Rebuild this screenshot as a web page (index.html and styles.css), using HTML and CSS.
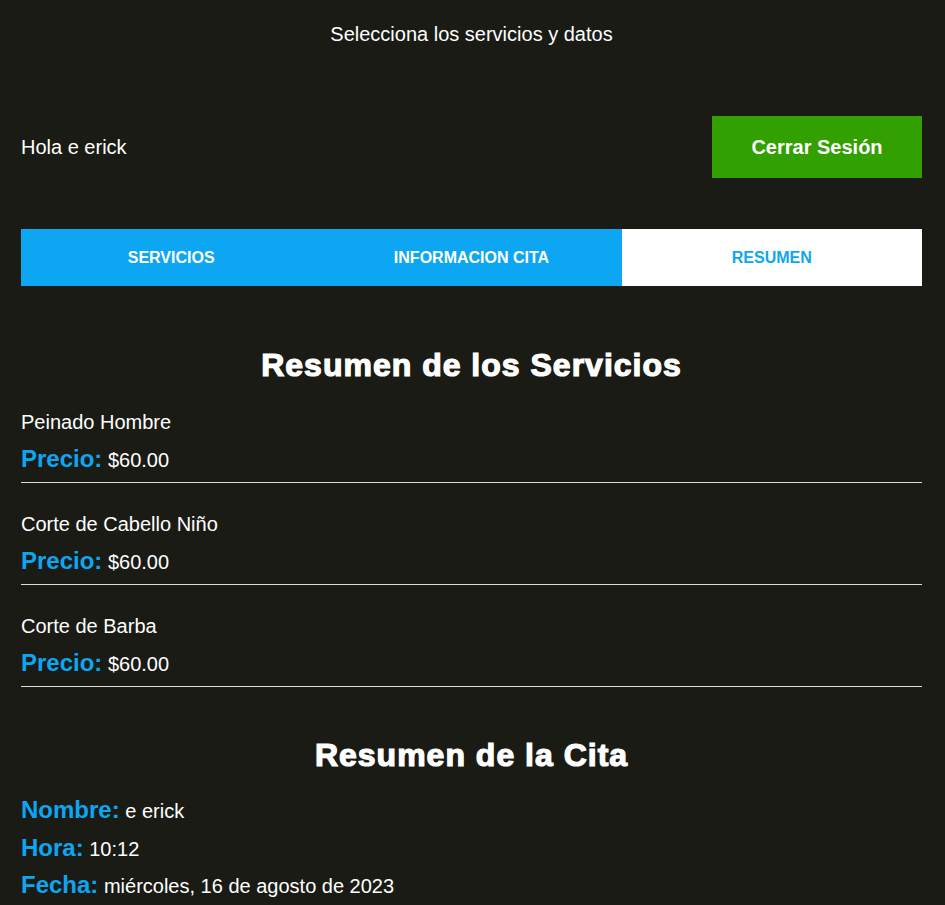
FILE: index.html
```html
<!DOCTYPE html>
<html lang="es">
<head>
<meta charset="UTF-8">
<title>App Salón</title>
<link rel="stylesheet" href="styles.css">
</head>
<body>
<main class="app">
  <p class="tagline">Selecciona los servicios y datos</p>

  <div class="barra">
    <p class="saludo">Hola e erick</p>
    <a class="boton-cerrar" href="#">Cerrar Sesión</a>
  </div>

  <nav class="tabs">
    <button class="tab" type="button">Servicios</button>
    <button class="tab" type="button">Informacion Cita</button>
    <button class="tab actual" type="button">Resumen</button>
  </nav>

  <section class="resumen">
    <h3 class="titulo titulo-servicios">Resumen de los Servicios</h3>

    <div class="servicio">
      <p class="nombre">Peinado Hombre</p>
      <p class="dato"><span class="etiqueta">Precio:</span> $60.00</p>
    </div>
    <div class="servicio">
      <p class="nombre">Corte de Cabello Niño</p>
      <p class="dato"><span class="etiqueta">Precio:</span> $60.00</p>
    </div>
    <div class="servicio">
      <p class="nombre">Corte de Barba</p>
      <p class="dato"><span class="etiqueta">Precio:</span> $60.00</p>
    </div>

    <h3 class="titulo titulo-cita">Resumen de la Cita</h3>

    <div class="cita">
      <p class="dato"><span class="etiqueta">Nombre:</span> e erick</p>
      <p class="dato"><span class="etiqueta">Hora:</span> 10:12</p>
      <p class="dato"><span class="etiqueta">Fecha:</span> miércoles, 16 de agosto de 2023</p>
    </div>
  </section>
</main>
</body>
</html>
```

FILE: styles.css
```css
* {
  box-sizing: border-box;
}

html {
  background: #1a1b15;
}

body {
  margin: 0;
  background: #1a1b15;
  color: #ffffff;
  font-family: "Liberation Sans", Arial, sans-serif;
  font-size: 20px;
  line-height: 23px;
}

.app {
  padding: 23px 23px 40px 21px;
}

p {
  margin: 0;
}

.tagline {
  text-align: center;
}

.barra {
  margin-top: 70px;
  display: flex;
  justify-content: space-between;
  align-items: center;
}

.boton-cerrar {
  display: block;
  width: 210px;
  height: 62px;
  line-height: 62px;
  text-align: center;
  background: #31a000;
  color: #ffffff;
  font-weight: 700;
  text-decoration: none;
}

.tabs {
  margin-top: 51px;
  display: grid;
  grid-template-columns: repeat(3, 1fr);
  height: 57px;
}

.tab {
  border: none;
  margin: 0;
  padding: 0;
  background: #0da6f3;
  color: #ffffff;
  font-family: "Liberation Sans", Arial, sans-serif;
  font-size: 16px;
  font-weight: 700;
  text-transform: uppercase;
  cursor: pointer;
}

.tab.actual {
  background: #ffffff;
  color: #0da6f3;
}

.titulo {
  margin: 0;
  text-align: center;
  font-size: 32px;
  line-height: 36px;
  font-weight: 900;
  letter-spacing: 1px;
  -webkit-text-stroke: 1.2px #ffffff;
}

.titulo-servicios {
  margin-top: 61px;
  margin-bottom: 28px;
}

.titulo-cita {
  margin-top: 50px;
  margin-bottom: 23px;
}

.servicio {
  display: flex;
  flex-direction: column;
  gap: 11px;
  padding-bottom: 8px;
  border-bottom: 1px solid #dcdcdc;
  margin-bottom: 30px;
}

.servicio:last-of-type {
  margin-bottom: 0;
}

.dato {
  line-height: 28px;
}

.etiqueta {
  color: #0da6f3;
  font-size: 24px;
  font-weight: 700;
}

.cita {
  display: flex;
  flex-direction: column;
  gap: 8.5px;
}
```
